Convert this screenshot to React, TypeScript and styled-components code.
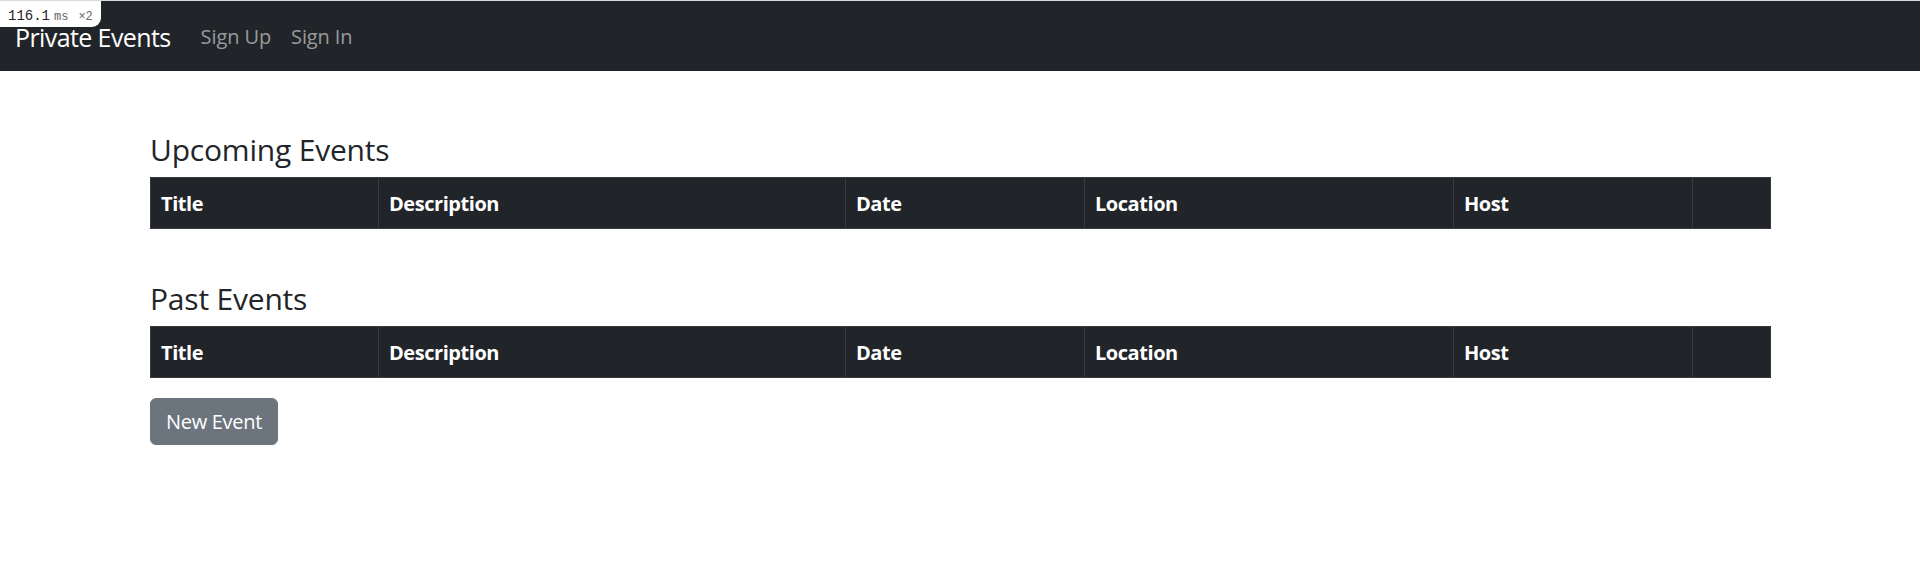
import React from "react";
import styled, { createGlobalStyle } from "styled-components";

const GlobalStyle = createGlobalStyle`
  html, body { margin: 0; padding: 0; background: #fff; }
  body {
    font-family: "Open Sans", "Noto Sans", "Liberation Sans", sans-serif;
    color: #212529;
    font-size: 20px;
    line-height: 1.5;
    border-top: 1px solid #d9dadb;
  }
  * { box-sizing: border-box; }
`;

const Navbar = styled.nav`
  position: relative;
  height: 70px;
  background: #212529;
  display: flex;
  align-items: center;
  padding: 0 15px;
`;

const Brand = styled.a`
  font-size: 25px;
  line-height: 37.5px;
  letter-spacing: -0.6px;
  padding-top: 3px;
  color: #fff;
  margin-right: 20px;
  text-decoration: none;
`;

const NavLink = styled.a`
  font-size: 20px;
  line-height: 30px;
  padding: 2px 10px 0;
  letter-spacing: -0.1px;
  color: rgba(255, 255, 255, 0.55);
  text-decoration: none;
`;

const PerfBadge = styled.div`
  position: absolute;
  top: -1px;
  left: 0;
  height: 27px;
  width: 101px;
  background: #fff;
  border-bottom-right-radius: 9px;
  display: flex;
  align-items: baseline;
  padding: 6px 0 0 8px;
  font-family: "Liberation Mono", "DejaVu Sans Mono", monospace;
`;

const PerfValue = styled.span`
  font-size: 14px;
  color: #222;
  margin-right: 4px;
`;

const PerfUnit = styled.span<{ $gap?: number }>`
  font-size: 12px;
  color: #666;
  margin-right: ${(p) => p.$gap ?? 0}px;
`;

const Container = styled.main`
  max-width: 1650px;
  margin: 60px auto 0;
  padding: 0 15px;
  display: flex;
  flex-direction: column;
  align-items: flex-start;
`;

const Heading = styled.h4`
  font-size: 30px;
  line-height: 36px;
  font-weight: 500;
  letter-spacing: -0.2px;
  padding-top: 1px;
  margin: 0 0 9px;
  color: #212529;
`;

const Section = styled.section<{ $gap: number }>`
  width: 100%;
  margin-bottom: ${(p) => p.$gap}px;
`;

const Table = styled.table`
  width: 100%;
  border-collapse: collapse;
  table-layout: fixed;
  margin: 0;
  background: #212529;
  color: #fff;
`;

const Th = styled.th<{ $w: number }>`
  width: ${(p) => p.$w}px;
  text-align: left;
  font-weight: 700;
  font-size: 20px;
  line-height: 30px;
  letter-spacing: -0.45px;
  padding: 11px 10px 9px;
  border: 1px solid #373b3e;
`;

const Button = styled.button`
  font-family: inherit;
  font-size: 20px;
  line-height: 30px;
  letter-spacing: -0.3px;
  padding: 7.5px 15px;
  border: 1px solid #6c757d;
  background: #6c757d;
  color: #fff;
  border-radius: 6px;
  cursor: pointer;
`;

const columns: [string, number][] = [
  ["Title", 228],
  ["Description", 467],
  ["Date", 239],
  ["Location", 369],
  ["Host", 239],
  ["", 78],
];

const EventsTable = () => (
  <Table>
    <thead>
      <tr>
        {columns.map(([label, w], i) => (
          <Th key={i} $w={w}>
            {label}
          </Th>
        ))}
      </tr>
    </thead>
  </Table>
);

export default function App() {
  return (
    <>
      <GlobalStyle />
      <Navbar>
        <PerfBadge>
          <PerfValue>116.1</PerfValue>
          <PerfUnit $gap={10}>ms</PerfUnit>
          <PerfUnit>×2</PerfUnit>
        </PerfBadge>
        <Brand href="#">Private Events</Brand>
        <NavLink href="#">Sign Up</NavLink>
        <NavLink href="#">Sign In</NavLink>
      </Navbar>
      <Container>
        <Section $gap={51}>
          <Heading>Upcoming Events</Heading>
          <EventsTable />
        </Section>
        <Section $gap={20}>
          <Heading>Past Events</Heading>
          <EventsTable />
        </Section>
        <Button>New Event</Button>
      </Container>
    </>
  );
}
